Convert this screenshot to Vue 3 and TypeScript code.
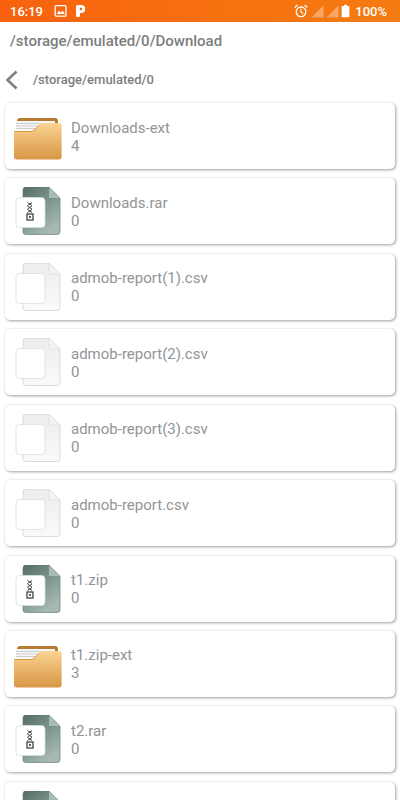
<script setup lang="ts">
type Kind = 'folder' | 'zip' | 'file'
interface Item { name: string; count: number; kind: Kind }
const items: Item[] = [
  { name: 'Downloads-ext', count: 4, kind: 'folder' },
  { name: 'Downloads.rar', count: 0, kind: 'zip' },
  { name: 'admob-report(1).csv', count: 0, kind: 'file' },
  { name: 'admob-report(2).csv', count: 0, kind: 'file' },
  { name: 'admob-report(3).csv', count: 0, kind: 'file' },
  { name: 'admob-report.csv', count: 0, kind: 'file' },
  { name: 't1.zip', count: 0, kind: 'zip' },
  { name: 't1.zip-ext', count: 3, kind: 'folder' },
  { name: 't2.rar', count: 0, kind: 'zip' },
  { name: 't2.zip', count: 0, kind: 'zip' }
]
</script>

<template>
  <div class="screen">
    <div class="status">
      <div class="status-left">
        <span class="time">16:19</span>
        <svg width="14" height="14" viewBox="0 0 14 14" class="ico-img">
          <rect x="1.2" y="1.6" width="10.8" height="10.6" rx="1.2" fill="none" stroke="#fff" stroke-width="1.3" />
          <path d="M2.5 10 L5 6.8 L6.8 8.6 L8.6 6.4 L11 10 Z" fill="#fff" />
        </svg>
        <svg width="10" height="12" viewBox="0 0 10 12" class="ico-p">
          <path fill-rule="evenodd" d="M0 1.5 Q0 0 1.5 0 H5.2 A4 4 0 0 1 5.2 8 H4 V10.500 Q4 12 2.500 12 H1.500 Q0 12 0 10.500 Z M3.800 2.800 V5.200 H5 A1.200 1.200 0 0 0 5 2.800 Z" fill="#fff" />
        </svg>
      </div>
      <div class="status-right">
        <svg width="14" height="14" viewBox="0 0 14 14">
          <circle cx="7" cy="7.8" r="4.8" fill="none" stroke="#fff" stroke-width="1.3" />
          <path d="M7 4.8 V8 L9.2 9.6" fill="none" stroke="#fff" stroke-width="1.1" />
          <path d="M0.8 3.4 L3.4 1 M13.2 3.4 L10.6 1" stroke="#fff" stroke-width="1.3" />
        </svg>
        <svg width="13" height="13" viewBox="0 0 13 13"><path d="M0.5 12.5 L12.5 0.5 V12.5 Z" fill="#fff" fill-opacity=".35" /></svg>
        <svg width="13" height="13" viewBox="0 0 13 13"><path d="M0.5 12.5 L12.5 0.5 V12.5 Z" fill="#fff" fill-opacity=".35" /></svg>
        <svg width="9" height="14" viewBox="0 0 9 14"><path d="M3 0.8 H6 V2 H7.6 Q8.4 2 8.4 2.8 V12.4 Q8.4 13.2 7.6 13.2 H1.4 Q0.6 13.2 0.6 12.4 V2.8 Q0.6 2 1.4 2 H3 Z" fill="#fff" /></svg>
        <span class="pct">100%</span>
      </div>
    </div>

    <div class="title">/storage/emulated/0/Download</div>

    <div class="nav">
      <svg width="14" height="20" viewBox="0 0 14 20">
        <path d="M12.500 1.500 L3.500 10 L12.500 18.500" fill="none" stroke="#7d8288" stroke-width="2.600" />
      </svg>
      <span class="parent">/storage/emulated/0</span>
    </div>

    <div class="list">
      <div v-for="item in items" :key="item.name" class="card">
        <div class="thumb">
          <svg v-if="item.kind === 'folder'" width="48" height="42" viewBox="0 0 48 42" class="folder">
            <defs>
              <linearGradient id="fg" x1="0" y1="0" x2="0" y2="1">
                <stop offset="0" stop-color="#fad391" />
                <stop offset="1" stop-color="#d99644" />
              </linearGradient>
            </defs>
            <path d="M3 10 V3 Q3 0 6 0 H41 Q44 0 44 3 V10 Z" fill="#b67a2e" />
            <path d="M2 3 H41 V12 H2 Z" fill="#f6f6f6" />
            <path d="M2 5.500 H41 M2 8 H35 M2 10.500 H28" stroke="#bcbcbc" stroke-width=".7" />
            <path d="M0 15 Q0 13 2 13 H17 Q19 13 21 11 L25 7 Q27 5 29 5 H45 Q47.600 5 47.600 8 V38.500 Q47.600 41.500 45 41.500 H3 Q0 41.500 0 38.500 Z" fill="url(#fg)" />
            <path d="M0 13.500 H17 Q19 13.500 21 11.500 L25 7.500" fill="none" stroke="#d98f2c" stroke-width=".8" />
          </svg>

          <svg v-else-if="item.kind === 'zip'" width="46" height="48" viewBox="0 0 46 48">
            <defs>
              <linearGradient id="zg" x1="0" y1="0" x2="0.6" y2="1">
                <stop offset="0" stop-color="#566d67" />
                <stop offset=".55" stop-color="#7f9790" />
                <stop offset="1" stop-color="#a6b8b3" />
              </linearGradient>
            </defs>
            <path d="M8 3 Q8 0 11 0 H34 L45 11 V45 Q45 47.500 42 47.500 H11 Q8 47.500 8 45 Z" fill="url(#zg)" stroke="#5c716b" stroke-width=".6" />
            <path d="M34 0 L45 11 H34 Z" fill="#a9bbb6" />
            <rect x="1" y="10.500" width="29" height="30" rx="3.500" fill="#fff" stroke="#d9dedd" stroke-width=".8" />
            <path d="M12.500 15.500 L17 18.500 M17 15.500 L12.500 18.500 M12.500 19 L17 22 M17 19 L12.500 22 M12.500 22.500 L17 25.500 M17 22.500 L12.500 25.500" stroke="#444" stroke-width="1" />
            <rect x="12" y="27" width="6" height="6" fill="#fff" stroke="#333" stroke-width="1.200" />
            <rect x="14.200" y="29" width="1.600" height="2" fill="#333" />
          </svg>

          <svg v-else width="46" height="48" viewBox="0 0 46 48">
            <defs>
              <linearGradient id="dg" x1="0" y1="0" x2="0" y2="1">
                <stop offset="0" stop-color="#ececec" />
                <stop offset="1" stop-color="#fafafa" />
              </linearGradient>
            </defs>
            <path d="M8 3 Q8 0 11 0 H34 L45 11 V45 Q45 47.500 42 47.500 H11 Q8 47.500 8 45 Z" fill="url(#dg)" stroke="#cfcfcf" stroke-width=".7" />
            <path d="M34 0 L45 11 H34 Z" fill="#f3f3f3" stroke="#d5d5d5" stroke-width=".5" />
            <rect x="1" y="10.500" width="29" height="30" rx="3.500" fill="#fff" stroke="#dddddd" stroke-width=".8" />
          </svg>
        </div>
        <div class="info">
          <div class="name">{{ item.name }}</div>
          <div class="count">{{ item.count }}</div>
        </div>
      </div>
    </div>
  </div>
</template>

<style>
html, body { margin: 0; background: #fff; overflow: hidden; }
</style>

<style scoped>
.screen {
  width: 400px;
  height: 800px;
  overflow: hidden;
  background: #fff;
  font-family: Roboto, "Liberation Sans", sans-serif;
}
.status {
  height: 22px;
  background: linear-gradient(90deg, #f8620e, #f57c12);
  display: flex;
  justify-content: space-between;
  align-items: center;
  padding: 0 13px 0 10px;
  color: #fff;
  font-weight: 500;
  font-size: 13px;
}
.status-left { display: flex; align-items: center; gap: 0; }
.time { width: 44px; }
.ico-img { margin-right: 8px; }
.status-right { display: flex; align-items: center; gap: 2px; }
.status-right svg:first-child { margin-right: 1px; }
.pct { margin-left: 3px; }
.title {
  height: 38px;
  line-height: 38px;
  padding-left: 10px;
  font-size: 15px;
  font-weight: 500;
  color: #7c7e80;
}
.nav {
  height: 43px;
  display: flex;
  align-items: center;
  padding-left: 4px;
  box-sizing: border-box;
  padding-bottom: 4px;
}
.parent {
  margin-left: 15px;
  font-size: 13px;
  font-weight: 500;
  color: #7c7e80;
}
.list {
  display: flex;
  flex-direction: column;
  gap: 9.43px;
  padding: 0 5px;
}
.card {
  height: 66px;
  flex: none;
  background: #fff;
  border-radius: 5px;
  box-shadow: 1px 1px 3px rgba(0, 0, 0, .36), 0 0 2px rgba(0, 0, 0, .08);
  display: flex;
  align-items: center;
}
.thumb {
  width: 66px;
  display: flex;
  justify-content: flex-start;
  padding-left: 10px;
  box-sizing: border-box;
  flex: none;
}
.folder { margin: 6px 0 0 -1px; }
.info { padding-top: 1px; }
.name, .count {
  font-size: 15px;
  line-height: 18px;
  color: #929496;
}
</style>
